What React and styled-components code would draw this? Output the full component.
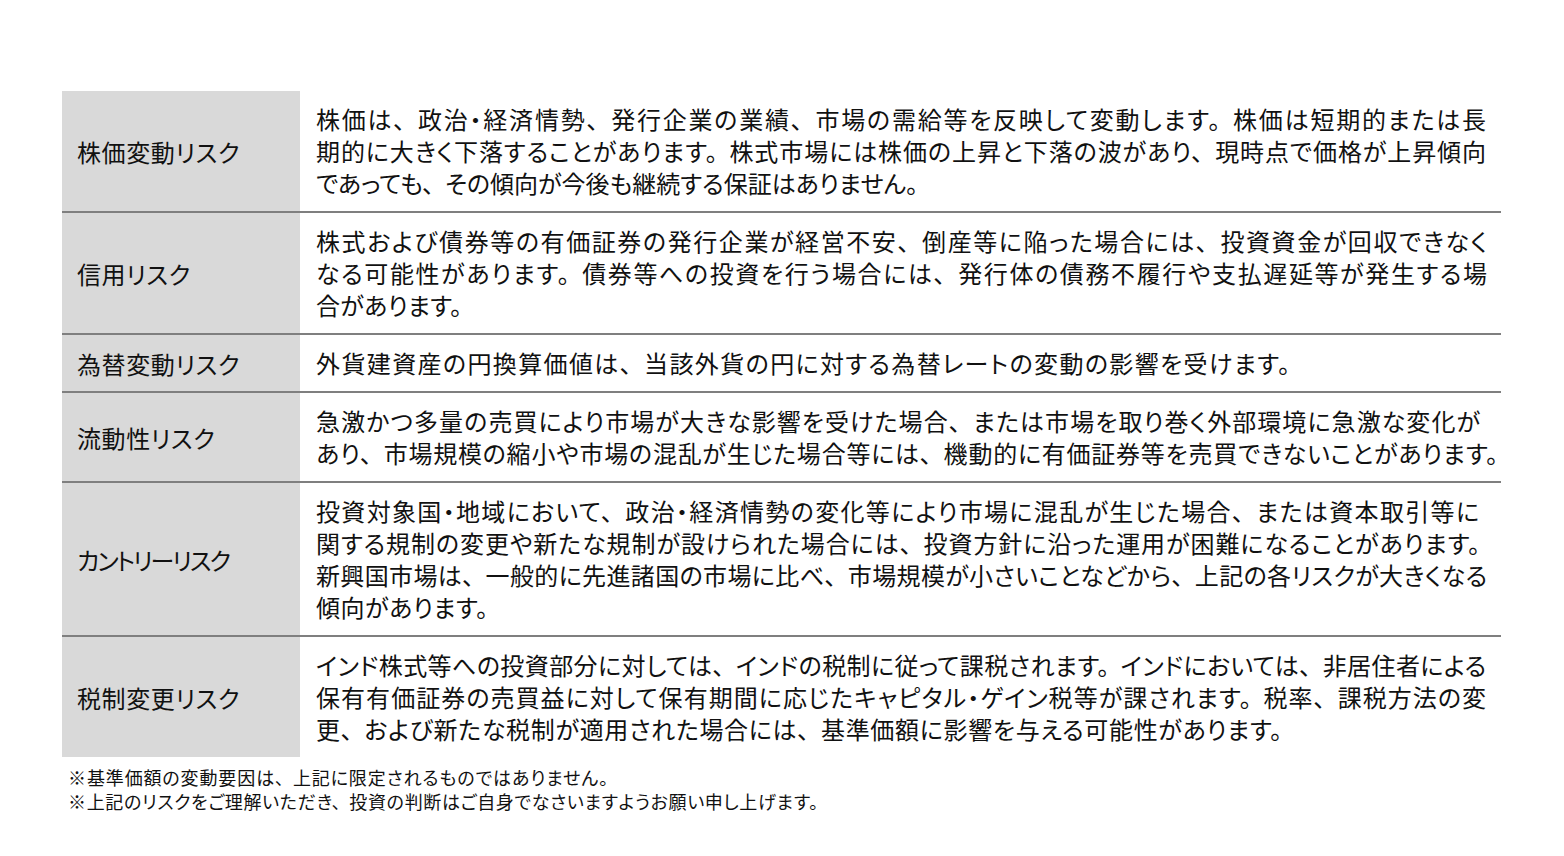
import React from 'react';
import styled, { createGlobalStyle } from 'styled-components';

const GlobalStyle = createGlobalStyle`
  body {
    margin: 0;
    background: #fff;
    font-family: "Noto Sans CJK JP", "Noto Sans", sans-serif;
    font-feature-settings: "palt";
    color: #111;
  }
`;

// each line: [text, width it spans in the original layout]
const risks = [
  {
    label: '株価変動リスク',
    lines: [
      ['株価は、政治・経済情勢、発行企業の業績、市場の需給等を反映して変動します。株価は短期的または長', 1170],
      ['期的に大きく下落することがあります。株式市場には株価の上昇と下落の波があり、現時点で価格が上昇傾向', 1170],
      ['であっても、その傾向が今後も継続する保証はありません。', 602],
    ],
  },
  {
    label: '信用リスク',
    lines: [
      ['株式および債券等の有価証券の発行企業が経営不安、倒産等に陥った場合には、投資資金が回収できなく', 1171],
      ['なる可能性があります。債券等への投資を行う場合には、発行体の債務不履行や支払遅延等が発生する場', 1171],
      ['合があります。', 146],
    ],
  },
  {
    label: '為替変動リスク',
    lines: [['外貨建資産の円換算価値は、当該外貨の円に対する為替レートの変動の影響を受けます。', 974]],
  },
  {
    label: '流動性リスク',
    lines: [
      ['急激かつ多量の売買により市場が大きな影響を受けた場合、または市場を取り巻く外部環境に急激な変化が', 1164],
      ['あり、市場規模の縮小や市場の混乱が生じた場合等には、機動的に有価証券等を売買できないことがあります。', 1182],
    ],
  },
  {
    label: 'カントリーリスク',
    tight: true,
    lines: [
      ['投資対象国・地域において、政治・経済情勢の変化等により市場に混乱が生じた場合、または資本取引等に', 1163],
      ['関する規制の変更や新たな規制が設けられた場合には、投資方針に沿った運用が困難になることがあります。', 1164],
      ['新興国市場は、一般的に先進諸国の市場に比べ、市場規模が小さいことなどから、上記の各リスクが大きくなる', 1171],
      ['傾向があります。', 172],
    ],
  },
  {
    label: '税制変更リスク',
    lines: [
      ['インド株式等への投資部分に対しては、インドの税制に従って課税されます。インドにおいては、非居住者による', 1170],
      ['保有有価証券の売買益に対して保有期間に応じたキャピタル・ゲイン税等が課されます。税率、課税方法の変', 1170],
      ['更、および新たな税制が適用された場合には、基準価額に影響を与える可能性があります。', 966],
    ],
  },
];

const notes = [
  ['※基準価額の変動要因は、上記に限定されるものではありません。', 540],
  ['※上記のリスクをご理解いただき、投資の判断はご自身でなさいますようお願い申し上げます。', 750],
];

// 、。 keep a full-width advance like the original font, except at line end
const withPunct = (text, small) => {
  const parts = text.split(/([、。])/);
  return parts.map((part, i) => {
    if (part !== '、' && part !== '。') return part;
    const atEnd = i === parts.length - 2 && parts[parts.length - 1] === '';
    return (
      <Punct key={i} small={small} atEnd={atEnd}>
        {part}
      </Punct>
    );
  });
};

const App = () => {
  return (
    <>
      <GlobalStyle />
      <Page>
        <Table>
          {risks.map((r, i) => (
            <Row key={r.label} first={i === 0}>
              <Label tight={r.tight}>{r.label}</Label>
              <Body>
                {r.lines.map(([text, w]) => (
                  <Line key={text} w={w}>
                    {withPunct(text)}
                  </Line>
                ))}
              </Body>
            </Row>
          ))}
        </Table>
        <Notes>
          {notes.map(([text, w]) => (
            <Note key={text} w={w}>
              {withPunct(text, true)}
            </Note>
          ))}
        </Notes>
      </Page>
    </>
  );
};

export default App;

const Page = styled.div`
  width: 1439px;
  padding: 91px 0 0 62px;
`;

const Table = styled.div`
  display: flex;
  flex-direction: column;
`;

const Row = styled.div`
  display: grid;
  grid-template-columns: 238px 1fr;
  border-top: ${(p) => (p.first ? 'none' : '2px solid #7f7f7f')};
`;

const Label = styled.div`
  background: #d9d9d9;
  display: flex;
  align-items: center;
  padding-left: 15px;
  font-size: 24px;
  letter-spacing: ${(p) => (p.tight ? '-2px' : '0.6px')};
  color: #111;
`;

const Body = styled.div`
  padding: 12px 0 12px 16px;
  display: flex;
  flex-direction: column;
  align-items: flex-start;
`;

const Line = styled.div`
  width: ${(p) => p.w}px;
  min-width: max-content;
  font-size: 24px;
  line-height: 32px;
  text-align: justify;
  text-align-last: justify;
  text-justify: inter-character;
  color: #111;
`;

const Punct = styled.span`
  margin-right: ${(p) => (p.atEnd ? '0' : p.small ? '8px' : '11px')};
`;

const Notes = styled.div`
  padding: 8px 0 0 6px;
  display: flex;
  flex-direction: column;
  align-items: flex-start;
`;

const Note = styled.div`
  width: ${(p) => p.w}px;
  min-width: max-content;
  font-size: 18px;
  line-height: 24px;
  text-align: justify;
  text-align-last: justify;
  text-justify: inter-character;
  color: #111;
`;
